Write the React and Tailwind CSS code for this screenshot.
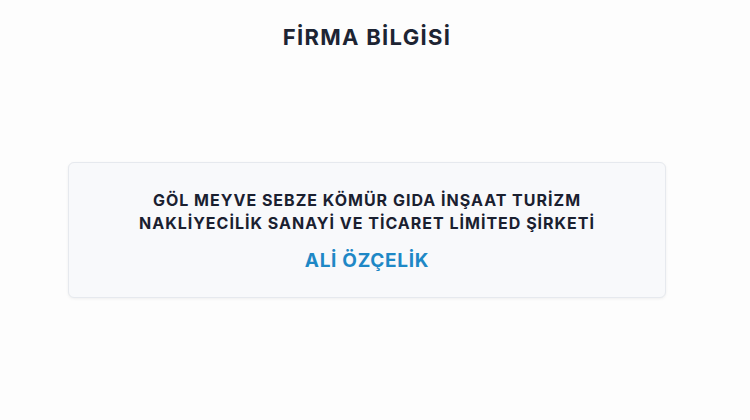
export default function App() {
  return (
    <div className="min-h-[420px] w-full bg-[#fdfdfd] pr-[16px]" style={{ fontFamily: 'Inter, "Noto Sans", sans-serif' }}>
      <div className="flex flex-col items-center pt-[22px]">
        <h1 className="text-[22px] font-bold leading-[30px] text-[#1d2433] tracking-[1.3px]">FİRMA BİLGİSİ</h1>
      </div>
      <div className="mx-[68px] mt-[110px] rounded-[6px] border border-[#e6e9ee] bg-[#f8f9fb] shadow-[0_1px_3px_rgba(0,0,0,0.06)] px-4 pt-[26px] pb-[24px] text-center">
        <p className="text-[16px] font-bold leading-[23px] text-[#1a2030] tracking-[1px]">
          GÖL MEYVE SEBZE KÖMÜR GIDA İNŞAAT TURİZM<br />NAKLİYECİLİK SANAYİ VE TİCARET LİMİTED ŞİRKETİ
        </p>
        <p className="mt-[14px] text-[19px] font-bold leading-[24px] text-[#1e88c6] tracking-[0.7px]">ALİ ÖZÇELİK</p>
      </div>
    </div>
  );
}
